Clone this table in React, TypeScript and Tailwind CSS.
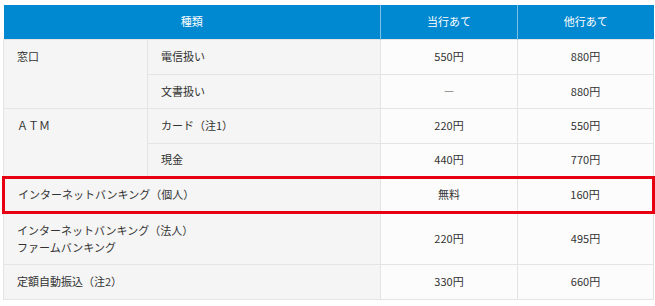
// 振込手数料の一覧表
const font = { fontFamily: '"Noto Sans CJK JP", "Noto Sans", sans-serif' };

const headCell = "border-x border-[#7fc0e8] bg-[#0088d0] p-0 font-normal text-white text-center";
const labelCell = "border border-[#e4e4e4] bg-[#f5f5f5] pl-[13px] pr-2 py-0 align-middle text-left";
const spanCell = "border border-[#e4e4e4] bg-[#f5f5f5] pl-[13px] pr-2 pt-[8px] pb-0 align-top text-left";
const valueCell = "border border-[#e4e4e4] bg-[#fcfcfc] p-0 text-center align-middle";
const red = "border-y-[3px] border-y-[#e60012]";

export default function App() {
  return (
    <div className="w-[655px] h-[306px] bg-white pt-[5px] pl-[2px] text-[11px] leading-[17px] text-[#333]" style={font}>
      <table className="w-[650px] border-collapse table-fixed">
        <colgroup>
          <col className="w-[144px]" />
          <col className="w-[233px]" />
          <col className="w-[137px]" />
          <col className="w-[136px]" />
        </colgroup>
        <thead>
          <tr className="h-[34px]">
            <th colSpan={2} className={headCell + " border-l-0"}>種類</th>
            <th className={headCell}>当行あて</th>
            <th className={headCell + " border-r-0"}>他行あて</th>
          </tr>
        </thead>
        <tbody>
          <tr className="h-[35px]">
            <td rowSpan={2} className={spanCell}>窓口</td>
            <td className={labelCell}>電信扱い</td>
            <td className={valueCell}>550円</td>
            <td className={valueCell}>880円</td>
          </tr>
          <tr className="h-[34px]">
            <td className={labelCell}>文書扱い</td>
            <td className={valueCell}><span className="text-[#999]">ー</span></td>
            <td className={valueCell}>880円</td>
          </tr>
          <tr className="h-[35px]">
            <td rowSpan={2} className={spanCell}>ＡＴＭ</td>
            <td className={labelCell}>カード（注1）</td>
            <td className={valueCell}>220円</td>
            <td className={valueCell}>550円</td>
          </tr>
          <tr className="h-[34px]">
            <td className={labelCell}>現金</td>
            <td className={valueCell}>440円</td>
            <td className={valueCell}>770円</td>
          </tr>
          <tr className="h-[35px]">
            <td colSpan={2} className={labelCell + " " + red + " border-l-[3px] border-l-[#e60012]"}>
              インターネットバンキング（個人）
            </td>
            <td className={valueCell + " " + red}>無料</td>
            <td className={valueCell + " " + red + " border-r-[3px] border-r-[#e60012]"}>160円</td>
          </tr>
          <tr className="h-[52px]">
            <td colSpan={2} className={labelCell}>
              インターネットバンキング（法人）
              <br />
              ファームバンキング
            </td>
            <td className={valueCell}>220円</td>
            <td className={valueCell}>495円</td>
          </tr>
          <tr className="h-[35px]">
            <td colSpan={2} className={labelCell}>定額自動振込（注2）</td>
            <td className={valueCell}>330円</td>
            <td className={valueCell}>660円</td>
          </tr>
        </tbody>
      </table>
    </div>
  );
}
